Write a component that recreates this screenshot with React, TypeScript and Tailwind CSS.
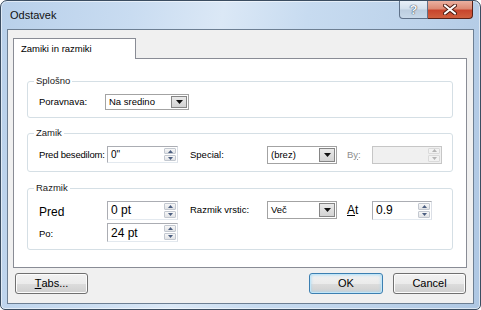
import type { ReactNode } from 'react';

function cn(...parts: (string | false | undefined)[]) {
  return parts.filter(Boolean).join(' ');
}

function Tri({ up, color = '#46597a' }: { up?: boolean; color?: string }) {
  return (
    <svg width="5" height="3" viewBox="0 0 5 3" className="block">
      <path d={up ? 'M0 3 L2.5 0 L5 3 Z' : 'M0 0 L5 0 L2.5 3 Z'} fill={color} />
    </svg>
  );
}

function Spin({ value, className, big, disabled }: { value?: string; className: string; big?: boolean; disabled?: boolean }) {
  return (
    <div
      className={cn(
        'flex items-stretch border shrink-0',
        disabled ? 'border-[#c6c6c6] bg-[#f0f0f0]' : 'border-[#abadb3] border-b-[#e3e9ef] border-r-[#dbdfe6] bg-white',
        className
      )}
    >
      <span className={cn('flex-1 flex items-center pl-[3px] leading-none', big ? 'text-[12px]' : 'text-[10px]')}>{value}</span>
      <div className="w-[14px] flex flex-col gap-[1px] p-[1px]">
        {[true, false].map((up) => (
          <div
            key={String(up)}
            className={cn(
              'flex-1 flex items-center justify-center border rounded-[1px]',
              disabled
                ? 'border-[#dadada] bg-[#f2f2f2]'
                : 'border-[#c3c8d0] bg-[linear-gradient(#f7f7f7,#e1e3e6)]'
            )}
          >
            <Tri up={up} color={disabled ? '#b4b4b4' : '#4b5e80'} />
          </div>
        ))}
      </div>
    </div>
  );
}

function Select({ value, className }: { value: string; className: string }) {
  return (
    <div className={cn('flex items-stretch border border-[#a3a3a3] bg-white shrink-0', className)}>
      <span className="flex-1 flex items-center pl-[3px] text-[9.5px] leading-none">{value}</span>
      <div className="w-[16px] my-[1px] mr-[1px] border border-[#858585] bg-[linear-gradient(#e9e9e9,#d3d3d3)] flex items-center justify-center">
        <svg width="7" height="4" viewBox="0 0 7 4" className="block">
          <path d="M0 0 L7 0 L3.5 4 Z" fill="#111" />
        </svg>
      </div>
    </div>
  );
}

function Group({ title, className, children }: { title: string; className?: string; children: ReactNode }) {
  return (
    <fieldset className={cn('border border-[#d5dfe5] rounded-[3px] min-w-0', className)}>
      <legend className="ml-[6px] px-[2px] text-[9.5px] leading-[14px] text-[#1a1a1a]">{title}</legend>
      {children}
    </fieldset>
  );
}

function Label({ children, className }: { children: ReactNode; className: string }) {
  return <span className={cn('shrink-0 whitespace-nowrap leading-none', className)}>{children}</span>;
}

function Button({ children, className, primary }: { children: ReactNode; className: string; primary?: boolean }) {
  return (
    <button
      className={cn(
        'h-[21px] rounded-[3px] border text-[11px] leading-none text-black flex items-center justify-center',
        'bg-[linear-gradient(#f2f2f2_0%,#ebebeb_50%,#dddddd_50%,#cfcfcf_100%)]',
        primary
          ? 'border-[#3c7fb1] shadow-[inset_0_0_0_1px_#c2e6f8,inset_0_0_3px_1px_#a6d8f2]'
          : 'border-[#707070] shadow-[inset_0_0_0_1px_#fcfcfc]',
        className
      )}
    >
      {children}
    </button>
  );
}

export default function App() {
  return (
    <div className="w-[481px] h-[310px] bg-white overflow-hidden text-black [font-family:'Liberation_Sans',Arial,sans-serif]">
      <div className="w-full h-full flex flex-col rounded-t-[7px] rounded-b-[5px] border border-[#3b4d61] px-[6px] pb-[5px] shadow-[inset_0_0_0_1px_rgba(255,255,255,0.55)] bg-[linear-gradient(100deg,#b8d0ea_0%,#c9dcf1_25%,#dbe8f6_42%,#c7dbf0_58%,#bcd2ea_80%,#aec7e3_100%)]">
        {/* title bar */}
        <div className="h-[28px] shrink-0 flex items-start justify-between">
          <span className="pl-[3px] pt-[9px] text-[11px] leading-none text-[#111]">Odstavek</span>
          <div className="flex mr-[1px]">
            <div className="w-[29px] h-[18px] rounded-bl-[4px] border border-t-0 border-[#5f7189] bg-[linear-gradient(#e9f0f8_0%,#d2dfec_48%,#bccddf_52%,#c8d8e9_100%)] flex items-center justify-center">
              <span className="text-[13px] leading-none font-bold text-[#f4f7fb] [text-shadow:0_0_1px_#2d3a4a,0_0_1px_#2d3a4a]">?</span>
            </div>
            <div className="w-[45px] h-[18px] rounded-br-[4px] border border-t-0 border-l-0 border-[#5a2117] bg-[linear-gradient(#eab0a0_0%,#dc8a74_45%,#c8452d_55%,#d0603f_100%)] flex items-center justify-center">
              <svg width="14" height="11" viewBox="0 0 14 11" className="block">
                <path d="M2 1.5 L12 9.5 M12 1.5 L2 9.5" stroke="#4a1a10" strokeWidth="4" strokeLinecap="round" />
                <path d="M2 1.5 L12 9.5 M12 1.5 L2 9.5" stroke="#ffffff" strokeWidth="2.2" strokeLinecap="round" />
              </svg>
            </div>
          </div>
        </div>

        {/* client area */}
        <div className="flex-1 flex flex-col bg-[#f0f0f0] border border-[#6d7f93] pl-[5px] pr-[6px] pt-[8px]">
          <div className="relative z-10 -mb-[1px] w-[123px] h-[21px] bg-white border border-b-0 border-[#898c95] flex items-center pl-[7px]">
            <span className="text-[9.5px] leading-none">Zamiki in razmiki</span>
          </div>
          <div className="h-[210px] bg-white border border-[#898c95] px-[13px] pt-[15px] text-[9.5px]">
            <Group title="Splošno" className="pb-[7px]">
              <div className="mt-[6px] h-[16px] flex items-center pl-[11px]">
                <Label className="w-[66px]">Poravnava:</Label>
                <Select value="Na sredino" className="w-[84px] h-[16px]" />
              </div>
            </Group>

            <Group title="Zamik" className="mt-[8px] pb-[8px]">
              <div className="mt-[6px] h-[17px] flex items-center pl-[11px]">
                <Label className="w-[68px] tracking-[-0.2px]">Pred besedilom:</Label>
                <Spin value={'0"'} className="w-[71px] h-[17px]" />
                <Label className="ml-[12px] w-[77px]">Special:</Label>
                <Select value="(brez)" className="w-[70px] h-[18px]" />
                <Label className="ml-[10px] w-[25px] text-[#8e8e8e]">
                  B<span className="underline">y</span>:
                </Label>
                <Spin disabled className="w-[70px] h-[18px]" />
              </div>
            </Group>

            <Group title="Razmik" className="mt-[9px] pb-[7px]">
              <div className="mt-[6px] h-[18px] flex items-center pl-[11px]">
                <Label className="w-[68px] text-[12px] pt-[4px]">Pred</Label>
                <Spin value="0 pt" big className="w-[71px] h-[19px]" />
                <Label className="ml-[12px] w-[77px]">Razmik vrstic:</Label>
                <Select value="Več" className="w-[70px] h-[18px]" />
                <Label className="ml-[10px] w-[25px] text-[12px]">
                  <span className="underline">A</span>t
                </Label>
                <Spin value="0.9" big className="w-[60px] h-[19px]" />
              </div>
              <div className="mt-[4px] h-[19px] flex items-center pl-[11px]">
                <Label className="w-[68px] pt-[2px]">Po:</Label>
                <Spin value="24 pt" big className="w-[71px] h-[19px]" />
              </div>
            </Group>
          </div>

          <div className="mt-[5px] flex items-center pl-[2px] pr-[1px]">
            <Button className="w-[73px]">
              <span className="underline">T</span>abs...
            </Button>
            <div className="flex-1" />
            <Button primary className="w-[74px]">OK</Button>
            <Button className="ml-[10px] w-[73px]">Cancel</Button>
          </div>
        </div>
      </div>
    </div>
  );
}
